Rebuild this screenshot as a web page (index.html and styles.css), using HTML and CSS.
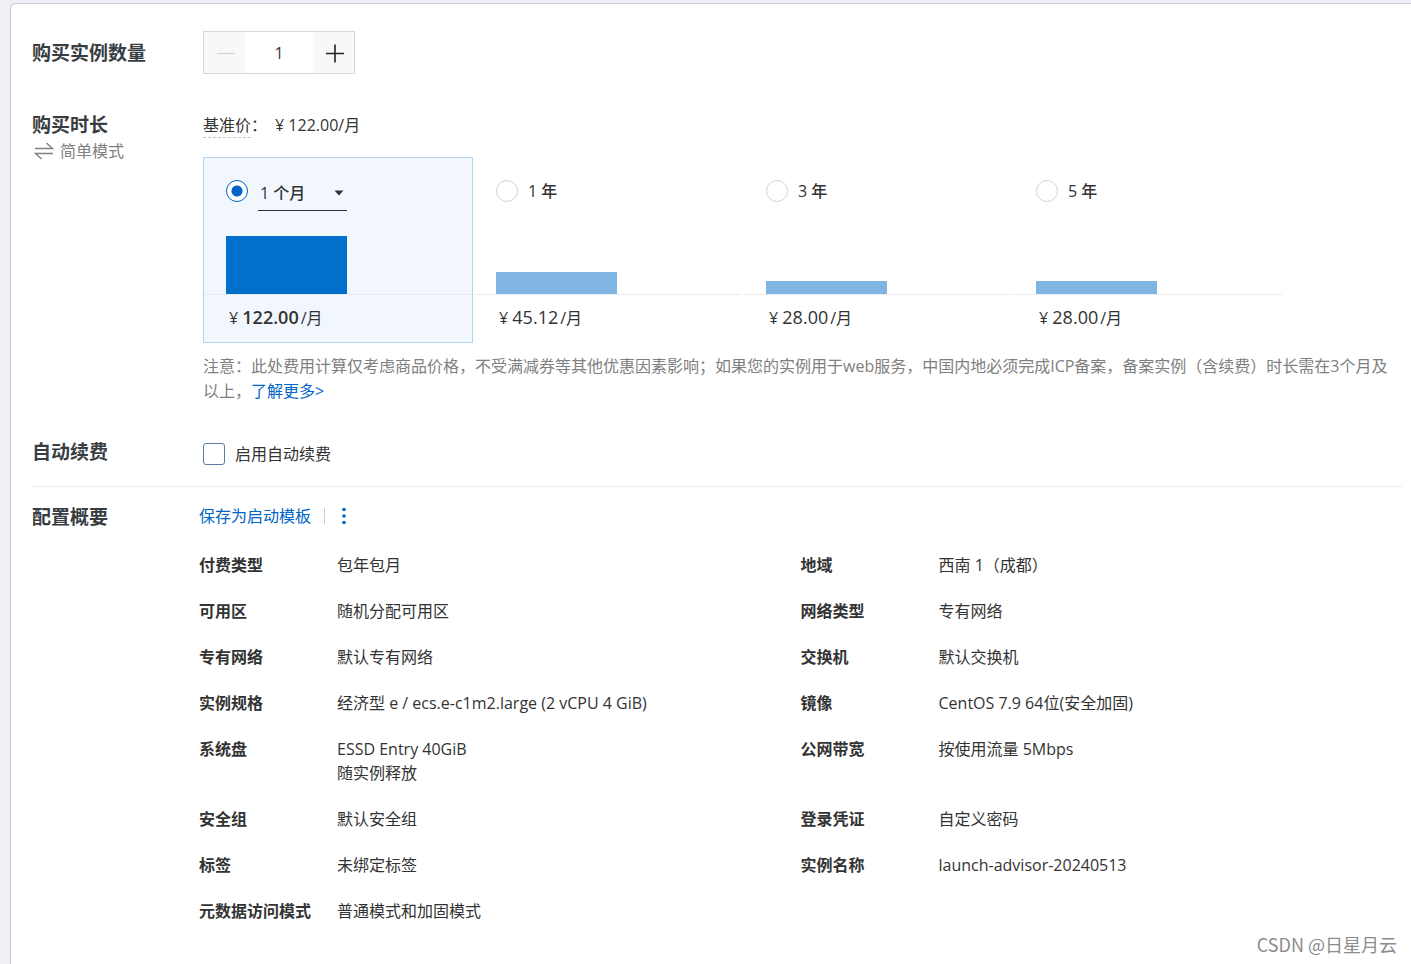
FILE: index.html
```html
<!DOCTYPE html>
<html lang="zh-CN">
<head>
<meta charset="utf-8">
<title>购买实例</title>
<link rel="stylesheet" href="styles.css">
</head>
<body>
<main class="panel">
  <section class="row row-quantity">
    <label class="title" for="quantity">购买实例数量</label>
    <div class="stepper">
      <button type="button" class="step" aria-label="减少" disabled>
        <svg width="20" height="20" viewBox="0 0 20 20"><path d="M2 10.5H20" stroke="currentColor" stroke-width="1.2"/></svg>
      </button>
      <input class="step-value" id="quantity" type="text" value="1">
      <button type="button" class="step" aria-label="增加">
        <svg width="20" height="20" viewBox="0 0 20 20"><path d="M2 10.5H20M11 1.5V19.5" stroke="currentColor" stroke-width="1.6"/></svg>
      </button>
    </div>
  </section>

  <section class="row row-duration">
    <div>
      <h2 class="title">购买时长</h2>
      <button type="button" class="mode">
        <svg width="20" height="18" viewBox="0 0 20 18" fill="none" stroke="currentColor" stroke-width="1.4"><path d="M1 6.5H18.5L12.5 1M19 11.5H1.5L7.5 17"/></svg>
        简单模式
      </button>
    </div>
    <div>
      <p class="base"><span class="base-name">基准价</span>：<span class="base-price">¥ 122.00/月</span></p>
      <div class="plans">
        <div class="plan plan-active">
          <div class="plan-head">
            <input class="radio" type="radio" name="plan" aria-label="按月" checked>
            <span class="months">
              <select class="months-select" aria-label="月数"><option>1 个月</option><option>2 个月</option><option>3 个月</option></select>
              <svg class="months-arrow" width="10" height="6" viewBox="0 0 10 6"><path d="M0.5 0.5H9.5L5 5.5Z" fill="currentColor"/></svg>
            </span>
          </div>
          <div class="chart"><div class="bar" style="height:58px"></div></div>
          <p class="price">¥ <b class="amount">122.00</b><span class="unit">/月</span></p>
        </div>
        <div class="plan">
          <div class="plan-head"><input class="radio" type="radio" name="plan" id="y1"><label class="plan-name" for="y1">1 年</label></div>
          <div class="chart"><div class="bar" style="height:22px"></div></div>
          <p class="price">¥ <span class="amount">45.12</span><span class="unit">/月</span></p>
        </div>
        <div class="plan">
          <div class="plan-head"><input class="radio" type="radio" name="plan" id="y3"><label class="plan-name" for="y3">3 年</label></div>
          <div class="chart"><div class="bar" style="height:13px"></div></div>
          <p class="price">¥ <span class="amount">28.00</span><span class="unit">/月</span></p>
        </div>
        <div class="plan">
          <div class="plan-head"><input class="radio" type="radio" name="plan" id="y5"><label class="plan-name" for="y5">5 年</label></div>
          <div class="chart"><div class="bar" style="height:13px"></div></div>
          <p class="price">¥ <span class="amount">28.00</span><span class="unit">/月</span></p>
        </div>
      </div>
      <p class="notice">注意：此处费用计算仅考虑商品价格，不受满减券等其他优惠因素影响；如果您的实例用于web服务，中国内地必须完成ICP备案，备案实例（含续费）时长需在3个月及以上，<a class="link" href="#">了解更多&gt;</a></p>
    </div>
  </section>

  <section class="row row-renew">
    <h2 class="title">自动续费</h2>
    <label class="check-label"><input class="check" type="checkbox">启用自动续费</label>
  </section>

  <section class="row row-summary">
    <h2 class="title">配置概要</h2>
    <div class="summary">
      <div class="actions">
        <a class="link" href="#">保存为启动模板</a>
        <span class="divider"></span>
        <button type="button" class="more" aria-label="更多">
          <svg width="4" height="18" viewBox="0 0 4 18" fill="currentColor"><circle cx="2" cy="2.5" r="1.8"/><circle cx="2" cy="9" r="1.8"/><circle cx="2" cy="15.5" r="1.8"/></svg>
        </button>
      </div>
      <dl class="specs">
        <div class="spec"><dt>付费类型</dt><dd>包年包月</dd></div>
        <div class="spec"><dt>地域</dt><dd>西南 1（成都）</dd></div>
        <div class="spec"><dt>可用区</dt><dd>随机分配可用区</dd></div>
        <div class="spec"><dt>网络类型</dt><dd>专有网络</dd></div>
        <div class="spec"><dt>专有网络</dt><dd>默认专有网络</dd></div>
        <div class="spec"><dt>交换机</dt><dd>默认交换机</dd></div>
        <div class="spec"><dt>实例规格</dt><dd>经济型 e / ecs.e-c1m2.large (2 vCPU 4 GiB)</dd></div>
        <div class="spec"><dt>镜像</dt><dd>CentOS 7.9 64位(安全加固)</dd></div>
        <div class="spec"><dt>系统盘</dt><dd>ESSD Entry 40GiB<br>随实例释放</dd></div>
        <div class="spec"><dt>公网带宽</dt><dd>按使用流量 5Mbps</dd></div>
        <div class="spec"><dt>安全组</dt><dd>默认安全组</dd></div>
        <div class="spec"><dt>登录凭证</dt><dd>自定义密码</dd></div>
        <div class="spec"><dt>标签</dt><dd>未绑定标签</dd></div>
        <div class="spec"><dt>实例名称</dt><dd>launch-advisor-20240513</dd></div>
        <div class="spec"><dt>元数据访问模式</dt><dd>普通模式和加固模式</dd></div>
      </dl>
    </div>
  </section>
</main>
<div class="watermark">CSDN @日星月云</div>
</body>
</html>
```
FILE: styles.css
```css
* {
  box-sizing: border-box;
}

body {
  margin: 0;
  padding: 3px 0 0 10px;
  min-height: 100vh;
  display: flex;
  background: #eff0f5;
  color: #333;
  font: 16px/24px "Open Sans", "Noto Sans CJK SC", sans-serif;
}

h2, p, dl, dd {
  margin: 0;
}

button, input, select {
  margin: 0;
  padding: 0;
  font: inherit;
  color: inherit;
}

button {
  border: 0;
  background: none;
  cursor: pointer;
}

.panel {
  flex: 1;
  min-width: 0;
  padding: 27px 9px 0 21px;
  background: #fff;
  border: 1px solid #c7c9cc;
  border-width: 1px 0 0 1px;
  border-top-left-radius: 6px;
}

.row {
  display: grid;
  grid-template-columns: 171px minmax(0, 1fr);
}

.title {
  font-size: 19px;
  line-height: 28px;
  font-weight: 700;
  color: #373d41;
}

.link {
  color: #0064c8;
  text-decoration: none;
}

/* Quantity */
.row-quantity {
  align-items: center;
}

.stepper {
  display: flex;
  width: 152px;
  height: 43px;
  border: 1px solid #d7d8d9;
}

.step {
  display: grid;
  place-items: center;
  width: 41px;
  background: #f7f8fa;
  color: #222;
}

.step:disabled {
  color: #d2d4d6;
}

.step-value {
  flex: 1;
  min-width: 0;
  border: 0;
  text-align: center;
}

/* Duration */
.row-duration {
  margin-top: 37px;
}

.mode {
  display: flex;
  align-items: center;
  gap: 6px;
  margin-left: 2px;
  color: #808080;
}

.base {
  display: flex;
  align-items: flex-start;
  margin-top: 2px;
}

.base-name {
  border-bottom: 1px dashed #c4c6c8;
}

.base-price {
  margin-left: 8px;
}

.plans {
  display: grid;
  grid-template-columns: repeat(4, 1fr);
  max-width: 1080px;
  margin-top: 19px;
}

.plan {
  padding-top: 22px;
  border: 1px solid transparent;
}

.plan-active {
  background: #f2f7fe;
  border-color: #b3d4ee;
}

.plan-head {
  display: flex;
  align-items: flex-start;
  gap: 10px;
  height: 31px;
  padding-left: 22px;
}

.radio {
  appearance: none;
  width: 22px;
  height: 22px;
  border: 1px solid #d2d4d6;
  border-radius: 50%;
  background: #fff;
}

.radio:checked {
  border-color: #0064c8;
  background: radial-gradient(circle, #0064c8 5px, #fff 6px);
}

.plan-name {
  line-height: 22px;
  font-weight: 500;
}

.months {
  display: grid;
  width: 89px;
}

.months-select, .months-arrow {
  grid-area: 1 / 1;
}

.months-select {
  appearance: none;
  width: 100%;
  height: 31px;
  padding: 0 0 4px 2px;
  border: 0;
  border-bottom: 1px solid #333;
  border-radius: 0;
  background: none;
  font-weight: 500;
}

.months-arrow {
  justify-self: end;
  align-self: center;
  margin: 0 3px 6px 0;
  pointer-events: none;
}

.chart {
  display: flex;
  align-items: flex-end;
  height: 84px;
  padding-left: 22px;
  border-bottom: 1px solid #ebebeb;
}

.bar {
  width: 121px;
  background: #80b5e3;
}

.plan-active .bar {
  background: #0070cc;
}

.price {
  padding-left: 25px;
  line-height: 47px;
}

.amount {
  font-size: 18px;
  line-height: 24px;
}

b.amount {
  font-weight: 600;
}

.unit {
  margin-left: 2px;
}

.notice {
  margin-top: 11px;
  padding-right: 8px;
  line-height: 25px;
  color: #808080;
}

/* Auto renewal */
.row-renew {
  margin-top: 34px;
  padding-bottom: 20px;
  border-bottom: 1px solid #ebebeb;
}

.check-label {
  display: flex;
  align-items: center;
  gap: 10px;
  margin-top: 5px;
  height: 22px;
}

.check {
  appearance: none;
  width: 22px;
  height: 22px;
  border: 1px solid #5a7ba8;
  border-radius: 3px;
  background: #fff;
}

/* Summary */
.row-summary {
  grid-template-columns: 167px minmax(0, 1fr);
  margin-top: 16px;
}

.actions {
  display: flex;
  align-items: center;
  height: 26px;
}

.divider {
  width: 1px;
  height: 16px;
  margin: 0 17px 0 13px;
  background: #ccc;
}

.more {
  display: flex;
  color: #0064c8;
}

.specs {
  display: grid;
  grid-template-columns: 1fr 1fr;
  row-gap: 22px;
  margin-top: 24px;
}

.spec {
  display: grid;
  grid-template-columns: 138px minmax(0, 1fr);
}

.spec dt {
  font-weight: 700;
}

.watermark {
  position: absolute;
  right: 14px;
  bottom: 7px;
  font: 18px/26px "Noto Sans CJK SC", sans-serif;
  color: #8c8c8c;
}
```
